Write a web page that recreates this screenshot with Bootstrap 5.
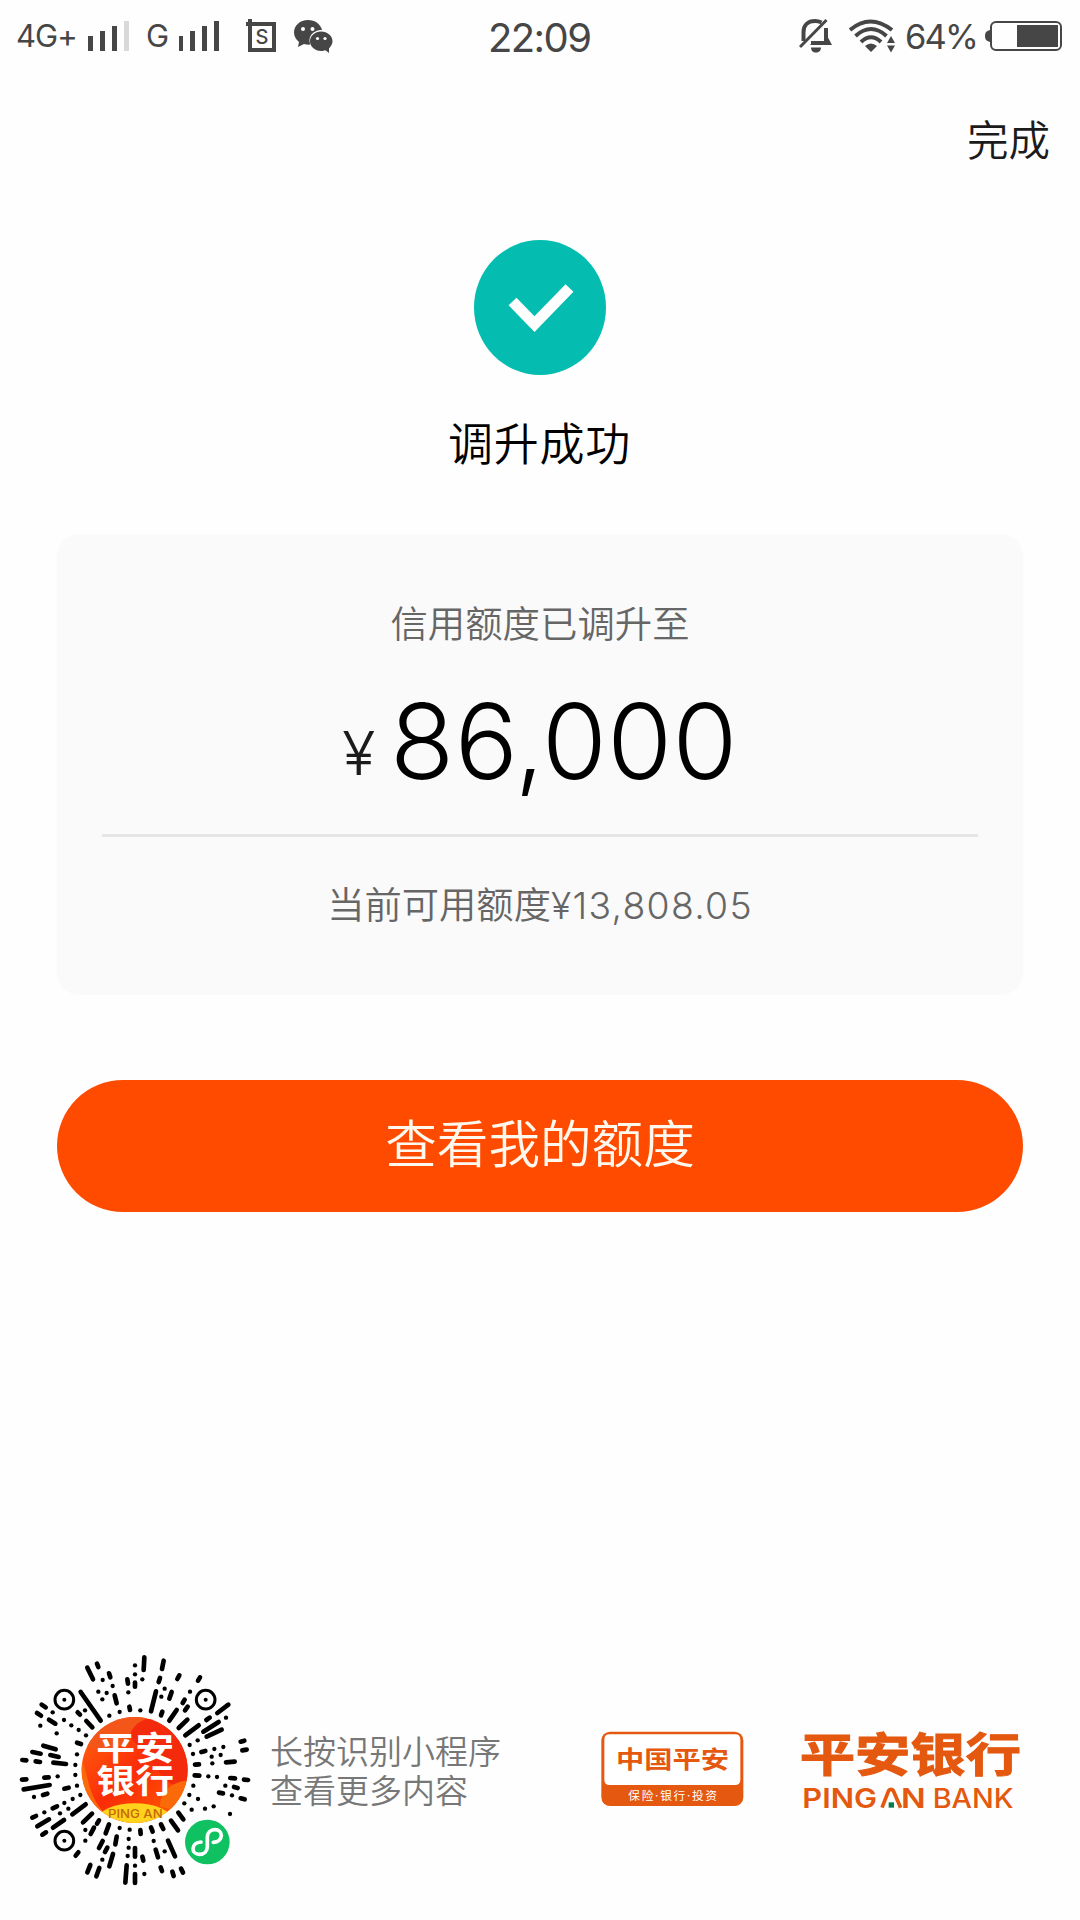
<!DOCTYPE html>
<html lang="zh-CN">
<head>
    <meta charset="UTF-8">
    <meta name="viewport" content="width=device-width, initial-scale=1">
    <title>调升成功</title>
    <!-- Bootstrap CSS -->
    <link href="https://cdn.jsdelivr.net/npm/bootstrap@5.3.0/dist/css/bootstrap.min.css" rel="stylesheet">
    <!-- Custom CSS -->
    <style>
        html, body {
            height: 100%;
            margin: 0;
            overflow: hidden;
            background-color: #fefefe;
        }

        body {
            font-family: "Inter", "Noto Sans CJK SC", sans-serif;
            font-weight: 350;
            color: #000;
        }

        svg {
            display: block;
            flex: none;
        }

        /* Status bar */
        .status-bar {
            height: 72px;
            padding: 0 17px 0 16px;
            color: #464646;
            line-height: 72px;
            white-space: nowrap;
        }

        .status-side {
            width: 474px;
        }

        .net-label {
            font-size: 31px;
            font-weight: 400;
            letter-spacing: -1px;
        }

        .net-main {
            width: 72px;
        }

        .net-second {
            width: 32px;
            margin-left: 16px;
            margin-right: 1px;
        }

        .clock {
            width: 98px;
            font-size: 40px;
            letter-spacing: -1.6px;
            font-weight: 400;
            line-height: 76px;
            margin: 0 1px 0 -2px;
        }

        .battery-label {
            width: 80px;
            font-size: 34.5px;
            font-weight: 400;
            letter-spacing: -1.8px;
            line-height: 78px;
            padding-top: 2px;
        }

        /* Top bar with the finish link */
        .top-bar {
            height: 136px;
            padding: 0 30px 0 0;
        }

        .btn-finish {
            font-size: 41.5px;
            line-height: 138px;
            color: #1b1b1b;
            text-decoration: none;
        }

        /* Result */
        .result {
            padding-top: 32px;
            height: 326px;
        }

        .result-title {
            margin: 35px 1px 0 0;
            font-size: 45px;
            font-weight: 350;
            line-height: 68px;
            letter-spacing: .8px;
        }

        .limit-card {
            width: 966px;
            height: 461px;
            border-radius: 22px;
            background-color: #fafafa;
            padding: 0 45px;
        }

        .limit-label {
            padding-top: 63px;
            font-size: 37.4px;
            line-height: 56px;
            color: #666;
        }

        .limit-amount {
            height: 181px;
            padding-top: 22px;
            font-weight: 300;
        }

        .amount-sign {
            font-size: 61px;
            line-height: 157px;
            margin-right: 15px;
            color: #1b1b1b;
        }

        .amount-value {
            font-size: 105px;
            line-height: 131px;
            letter-spacing: .4px;
        }

        .limit-line {
            height: 3px;
            margin: 0;
            border: 0;
            background-color: #e6e6e6;
            opacity: 1;
        }

        .limit-current {
            padding-top: 41px;
            font-size: 37.3px;
            line-height: 56px;
            color: #666;
        }

        .current-value {
            letter-spacing: 1.3px;
        }

        .btn-limit {
            width: 966px;
            height: 132px;
            margin-top: 85px;
            padding: 0 0 3px;
            border: 0;
            border-radius: 66px;
            background-color: #ff4b00;
            color: #fff8ee;
            font-size: 51.6px;
            font-weight: 350;
        }

        .btn-limit:hover {
            background-color: #e64400;
            color: #fff;
        }

        /* Footer */
        .page-footer {
            height: 280px;
        }

        .scan-hint {
            width: 331px;
            padding-top: 93px;
            font-size: 33px;
            line-height: 39px;
            color: #777;
        }

        .group-logo {
            margin-top: 91px;
        }

        .bank-logo {
            margin: 63px 0 0 43px;
        }
    </style>
</head>
<body class="d-flex flex-column align-items-center">
    <!-- Status bar -->
    <header class="status-bar d-flex w-100">
        <div class="status-side d-flex align-items-center">
            <span class="net-label net-main">4G+</span>
            <svg width="42" height="30" fill="#464646">
                <path d="M0 15h5v15H0zM12 10h5v20h-5zM24 5h5v25h-5z"/>
                <path fill="#d9d9d9" d="M36 0h5v30h-5z"/>
            </svg>
            <span class="net-label net-second">G</span>
            <svg width="42" height="30" fill="#464646">
                <path d="M-1 15h5v15h-5zM11 10h5v20h-5zM23 5h5v25h-5zM35 0h5v30h-5z"/>
            </svg>
            <svg class="ms-4" width="32" height="34" viewBox="0 0 32 34">
                <path d="M5 0v31h24V5H1" fill="none" stroke="#464646" stroke-width="4"/>
                <text x="17" y="25" text-anchor="middle" font-size="20" font-weight="500" fill="#464646">S</text>
            </svg>
            <svg class="ms-3" width="40" height="34" viewBox="-1 0 40 34">
                <path fill="#464646" d="M14 1C6 1 0 6.500 0 13.500c0 4 2 7 5 9.500L4 28l6-3c2 .6 4 .8 6.500.6C13 17 20 11 28 11 26.500 5 21 1 14 1z"/>
                <path fill="#464646" d="M27 12.500c-6 0-11 4.500-11 9.800S21 32 27 32c2 0 3-.3 4.500-.8L35 34v-4.500c2-2 3.500-4.500 3.500-7.200 0-5.300-5-9.800-11.500-9.800z"/>
                <g fill="#fefefe"><circle cx="9" cy="10" r="2"/><circle cx="18.500" cy="10" r="2"/><circle cx="23.500" cy="19.500" r="1.600"/><circle cx="31" cy="19.500" r="1.600"/></g>
            </svg>
        </div>
        <span class="clock">22:09</span>
        <div class="status-side d-flex align-items-center justify-content-end ms-auto">
            <!-- Muted bell -->
            <svg width="50" height="36" viewBox="0 0 50 36" fill="none" stroke="#464646">
                <path stroke-width="4" d="M4.500 23V14C4.500 7 9 3 16 3c2.500 0 4.500.5 6.500 1.500M27 10v15H12"/>
                <path stroke-width="3" d="M1 29 27.500 2"/>
                <path fill="#464646" stroke="none" d="M28.700 19l4.300 8H11l3-3.500h14.700zM12 29.500h10c0 3-2 5-5 5s-5-2-5-5z"/>
            </svg>
            <svg width="56" height="36" viewBox="0 0 56 36" fill="none" stroke="#464646" stroke-width="4">
                <path d="M1 12Q21-5 43 12M6.500 18Q22 4 37.500 18M12 24Q22 14.500 32 24"/>
                <path fill="#464646" stroke="none" d="M16 28Q22 23 28 28L22 34zM38 25l4-7 4 7zM38 27.500l4 7 4-7z"/>
            </svg>
            <span class="battery-label">64%</span>
            <svg width="78" height="32" viewBox="0 0 78 32">
                <path fill="#464646" d="M5 10v12C1 21 0 19 0 16s1-5 5-6z"/>
                <rect x="6" y="2" width="70" height="28" rx="5" fill="none" stroke="#464646" stroke-width="2"/>
                <path fill="#464646" d="M32 5h41v22H32z"/>
            </svg>
        </div>
    </header>

    <nav class="top-bar d-flex justify-content-end w-100">
        <a class="btn-finish" href="#">完成</a>
    </nav>

    <!-- Result -->
    <section class="result d-flex flex-column align-items-center">
        <svg width="132" height="136" viewBox="0 0 132 136">
            <ellipse cx="66" cy="67.500" rx="66" ry="67.500" fill="#04bdb0"/>
            <path d="M38.500 61.500 60.500 84 95.500 48" fill="none" stroke="#fff" stroke-width="11"/>
        </svg>
        <h1 class="result-title">调升成功</h1>
    </section>

    <section class="limit-card text-center">
        <div class="limit-label">信用额度已调升至</div>
        <div class="limit-amount d-flex justify-content-center align-items-start">
            <span class="amount-sign">¥</span><span class="amount-value">86,000</span>
        </div>
        <hr class="limit-line">
        <div class="limit-current">当前可用额度<span class="current-value">¥13,808.05</span></div>
    </section>

    <button type="button" class="btn btn-limit">查看我的额度</button>

    <!-- Footer -->
    <footer class="page-footer d-flex align-items-start w-100 mt-auto">
        <svg width="270" height="260" viewBox="0 0 810 780">
            <defs>
                <clipPath id="logoClip"><circle cx="404" cy="390" r="159"/></clipPath>
                <linearGradient id="logoFill" x1="0" y1="0" x2="1" y2="1">
                    <stop offset="0" stop-color="#ff6a10"/>
                    <stop offset=".5" stop-color="#fb2c08"/>
                    <stop offset="1" stop-color="#ff6500"/>
                </linearGradient>
            </defs>
            <g id="rays" stroke="#000" stroke-linecap="round"></g>
            <g fill="none" stroke="#000" stroke-width="9">
                <circle cx="193" cy="179" r="28"/><circle cx="617" cy="179" r="28"/><circle cx="193" cy="602" r="28"/>
            </g>
            <circle cx="193" cy="179" r="6"/><circle cx="617" cy="179" r="6"/><circle cx="193" cy="602" r="6"/>
            <g clip-path="url(#logoClip)">
                <path fill="url(#logoFill)" d="M240 225h330v330H240z"/>
                <path fill="#f4561a" d="M240 225h230c-40 8-70 30-82 62-40 60-90 55-148 20z"/>
                <path fill="#f42a0c" d="M390 290c5-40 50-65 100-50l80 60v130c-60 30-90-30-120-70z"/>
                <path fill="#fb6a08" d="M240 350c30 60 20 110 70 165H240zM480 500c0-50 40-75 90-80v100z"/>
                <ellipse cx="404" cy="540" rx="112" ry="50" fill="#ffd21c"/>
            </g>
            <g font-family="Noto Sans CJK SC" font-size="99" font-weight="700" fill="#fff">
                <text x="289" y="359" textLength="233" lengthAdjust="spacingAndGlyphs">平安</text>
                <text x="289" y="460" textLength="233" lengthAdjust="spacingAndGlyphs">银行</text>
            </g>
            <text x="324" y="535" font-size="34" font-weight="500" fill="#c4680c" textLength="164" lengthAdjust="spacingAndGlyphs">PING AN</text>
            <circle cx="622" cy="606" r="67" fill="#0fc160"/>
            <path d="M603 606c-15 1-24 9-24 20 0 10 8 17 19 17 15 0 24-10 24-23v-28c0-13 9-23 23-23 11 0 19 7 19 17 0 11-9 20-24 21" fill="none" stroke="#fff" stroke-width="11" stroke-linecap="round"/>
        </svg>
        <div class="scan-hint">长按识别小程序<br>查看更多内容</div>
        <svg class="group-logo" width="143" height="76" viewBox="0 0 429 228">
            <rect x="1" y="2" width="426" height="223" rx="26" fill="#e4580f"/>
            <path d="M10 26q0-16 16-16h376q16 0 16 16v120q0 16-16 16H26q-16 0-16-16z" fill="#fff"/>
            <text x="45" y="111" font-family="Noto Sans CJK SC" font-size="72" font-weight="700" fill="#e4580f" textLength="339" lengthAdjust="spacingAndGlyphs">中国平安</text>
            <text x="82" y="206" font-family="Inter, Noto Sans CJK SC" font-size="35" font-weight="400" fill="#fff" textLength="266" lengthAdjust="spacing">保险·银行·投资</text>
        </svg>
        <svg class="bank-logo" width="236" height="110" viewBox="0 -60 708 330">
            <text x="38" y="144" font-family="Noto Sans CJK SC" font-size="138" font-weight="700" fill="#e4580f" stroke="#e4580f" stroke-width="3" textLength="664" lengthAdjust="spacingAndGlyphs">平安银行</text>
            <g fill="#e4580f" font-size="80">
                <text x="46" y="254" font-weight="600" textLength="224" lengthAdjust="spacingAndGlyphs">PING</text>
                <text x="342" y="254" font-weight="600" textLength="74" lengthAdjust="spacingAndGlyphs">N</text>
                <text x="437" y="254" font-weight="500" textLength="243" lengthAdjust="spacingAndGlyphs">BANK</text>
            </g>
            <path d="M285 254 305 203q3-4 7-4t7 4l22 51" fill="none" stroke="#e4580f" stroke-width="11"/>
            <path d="M305 238h16v16h-16z" fill="#0b7a4b"/>
        </svg>
    </footer>

    <!-- Bootstrap JS -->
    <script src="https://cdn.jsdelivr.net/npm/bootstrap@5.3.0/dist/js/bootstrap.bundle.min.js"></script>
    <!-- Custom JS -->
    <script>
        // Mini program code: strokes as x1,y1,x2,y2 and dots as x,y
        const strokes = [
            [433,52,431,90], [491,62,486,87], [405,128,405,140], [382,118,384,131], [291,71,295,81],
            [262,83,279,118], [327,100,331,112], [344,166,350,190], [242,156,302,242], [233,217,240,224],
            [259,243,277,262], [388,200,390,210], [468,154,453,214], [480,114,476,126], [515,156,508,176],
            [538,106,532,117], [600,112,594,122], [554,179,548,189], [563,200,555,211], [487,215,483,226],
            [530,210,508,242], [562,239,536,264], [685,194,652,219], [629,233,619,240], [656,246,610,275],
            [665,269,620,290], [596,256,556,286], [733,302,722,305], [740,329,727,331], [616,333,604,336],
            [704,365,678,367], [597,373,585,374], [598,407,584,406], [705,415,691,414], [744,420,732,419],
            [713,444,702,441], [669,460,657,458], [734,478,722,475],
            [125,194,137,202], [111,219,123,227], [147,239,166,251], [231,308,243,312], [130,317,167,328],
            [97,336,122,341], [151,345,176,351], [67,360,79,361], [107,364,120,366], [160,368,198,372],
            [133,413,146,412], [66,419,79,418], [71,448,149,435], [193,446,206,443], [129,465,142,461],
            [158,505,171,499], [97,533,108,528], [257,493,217,523], [147,538,112,559], [192,540,159,563],
            [127,584,138,577], [276,521,249,547], [297,541,291,551],
            [282,563,272,582], [327,553,317,580], [235,637,227,647], [308,603,297,624], [322,623,315,636],
            [350,590,346,613], [339,642,328,679], [271,675,262,697], [298,684,289,709], [380,676,376,728],
            [405,624,405,650], [405,702,405,729], [427,650,430,662], [421,570,422,582], [453,562,458,575],
            [467,629,474,652], [482,682,486,693], [504,602,525,649], [483,553,490,567], [513,542,534,571],
            [535,518,550,538], [517,695,521,708], [543,686,549,698]
        ];
        const dots = [
            [405,76], [405,103], [427,118], [385,157], [308,120], [338,138], [295,155], [320,159], [307,178],
            [255,211], [328,227], [359,216], [421,211], [494,146], [484,170], [570,155], [678,233], [593,301],
            [569,315], [670,321], [643,327], [579,342], [635,350], [662,345], [637,370], [625,409], [651,411],
            [676,437], [696,466], [580,437], [568,465], [594,477], [641,499], [615,506], [690,522], [553,490],
            [575,509], [158,217], [121,257], [192,240], [214,256], [170,280], [236,270], [258,286], [231,343],
            [226,375], [226,405], [173,409], [231,437], [102,471], [241,465], [193,489], [218,477], [133,517],
            [205,506], [180,520], [256,570], [256,602], [307,659], [359,564], [389,569], [386,597], [386,623],
            [383,648], [405,677], [433,702], [461,603], [494,634]
        ];
        const rays = document.getElementById('rays');

        strokes.forEach(s => drawRay(s, 14));
        dots.forEach(d => drawRay([d[0], d[1], d[0], d[1]], 13));

        function drawRay([x1, y1, x2, y2], width) {
            const line = document.createElementNS('http://www.w3.org/2000/svg', 'path');
            line.setAttribute('d', `M${x1} ${y1}L${x2} ${y2}`);
            line.setAttribute('stroke-width', width);
            rays.appendChild(line);
        }
    </script>
</body>
</html>
